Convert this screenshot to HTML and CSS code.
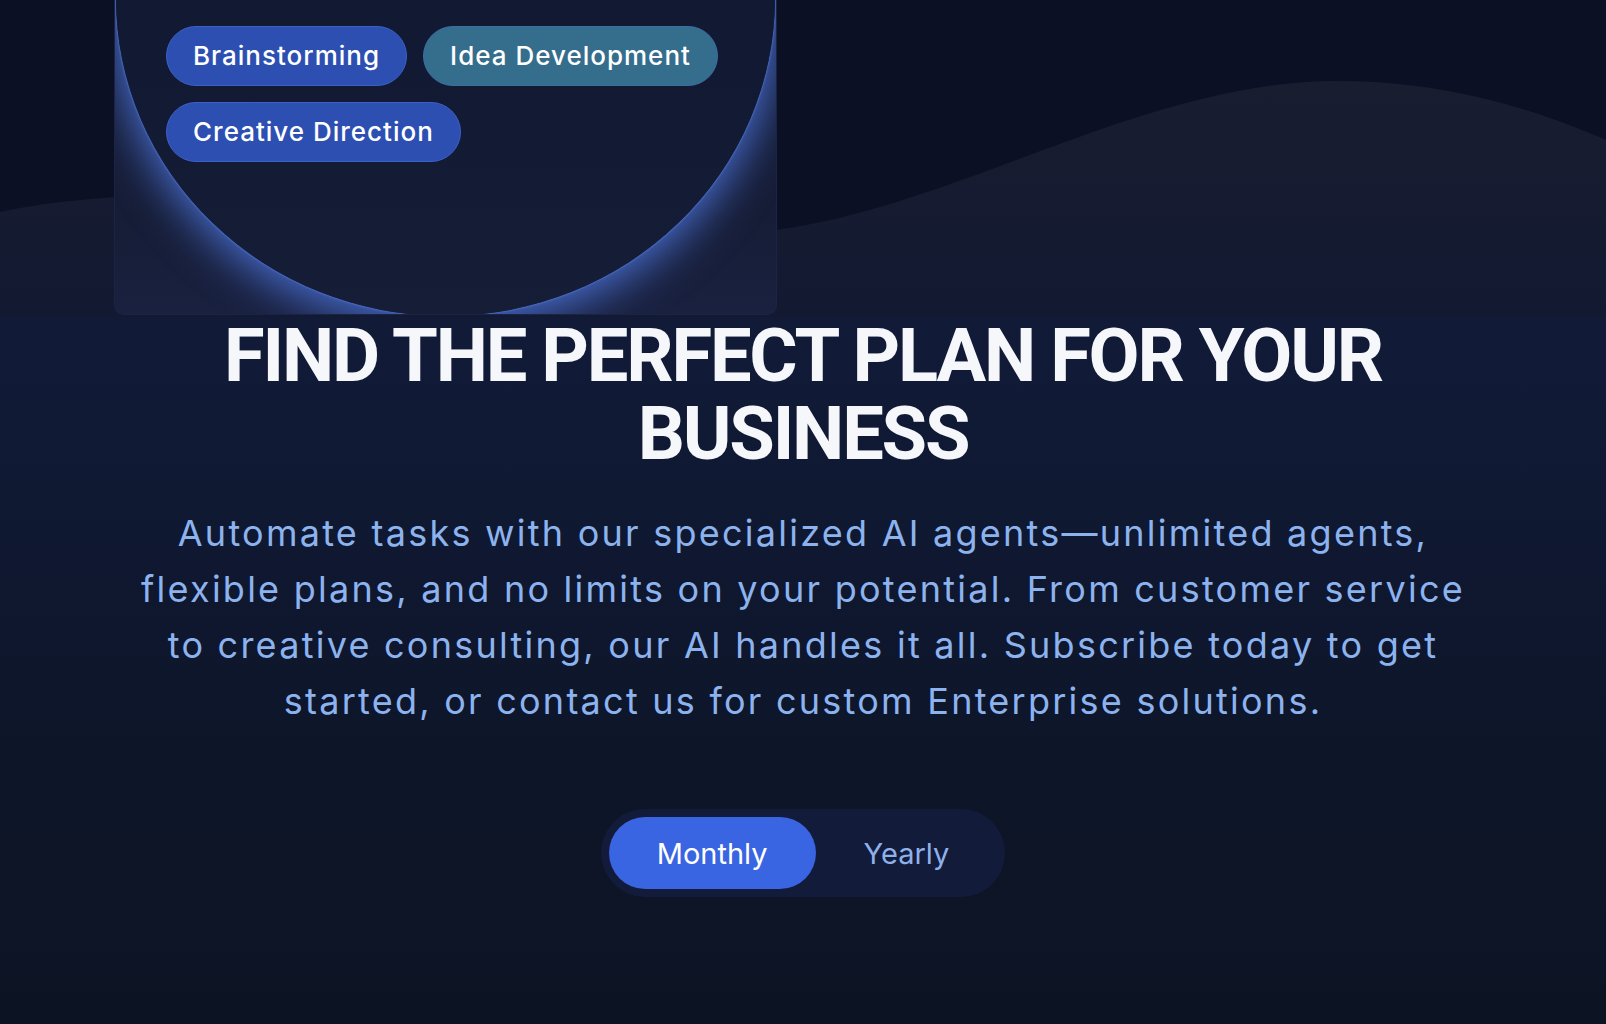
FILE: index.html
```html
<!DOCTYPE html>
<html lang="en">
<head>
<meta charset="utf-8">
<title>Pricing</title>
<link rel="stylesheet" href="styles.css">
</head>
<body>
  <section class="showcase">
    <svg class="wave" viewBox="0 0 1606 317" preserveAspectRatio="none" aria-hidden="true">
      <defs>
        <linearGradient id="waveFill" x1="0" y1="0" x2="0" y2="1">
          <stop offset="0" stop-color="#181d30"/>
          <stop offset="1" stop-color="#131931"/>
        </linearGradient>
      </defs>
      <path d="M0,212 C250,160 550,250 776,230 C960,205 1140,84 1331,81 C1450,80 1540,112 1606,140 L1606,317 L0,317 Z" fill="url(#waveFill)"/>
    </svg>
    <div class="card">
      <div class="arc"></div>
      <div class="tags">
        <span class="tag">Brainstorming</span>
        <span class="tag tag-teal">Idea Development</span>
        <span class="tag">Creative Direction</span>
      </div>
    </div>
  </section>

  <section class="pricing">
    <h1 class="pricing-title">FIND THE PERFECT PLAN FOR YOUR<br>BUSINESS</h1>
    <p class="pricing-lead">Automate tasks with our specialized AI agents—unlimited agents,<br>flexible plans, and no limits on your potential. From customer service<br>to creative consulting, our AI handles it all. Subscribe today to get<br>started, or contact us for custom Enterprise solutions.</p>
    <div class="billing-toggle">
      <button class="toggle-btn is-active" type="button">Monthly</button>
      <button class="toggle-btn" type="button">Yearly</button>
    </div>
  </section>
</body>
</html>
```

FILE: styles.css
```css
* { box-sizing: border-box; }

html, body {
  margin: 0;
  padding: 0;
}

body {
  background: #0c1424;
  font-family: "Inter", "Liberation Sans", sans-serif;
  overflow: hidden;
}

/* ---------- top showcase ---------- */
.showcase {
  position: relative;
  height: 317px;
  background: #0b1024;
  padding-left: 114px;
  overflow: hidden;
}

.wave {
  position: absolute;
  inset: 0;
  width: 100%;
  height: 100%;
  display: block;
}

.card {
  position: relative;
  width: 663px;
  height: 315px;
  background: linear-gradient(180deg, #151c35 0%, #161d36 70%, #1a2140 100%);
  border: 1px solid #1b2444;
  border-top: none;
  border-radius: 0 0 10px 10px;
  overflow: hidden;
}

.arc {
  position: absolute;
  left: 1px;
  right: 1px;
  top: -320px;
  height: 636px;
  border-radius: 50%;
  background: linear-gradient(180deg, #121a33 0%, #121a33 60%, #161e37 100%);
  box-shadow:
    0 0 2px 1px rgba(85, 125, 225, 0.6),
    0 6px 44px 4px rgba(78, 118, 222, 0.92);
}

.tags {
  position: relative;
  display: flex;
  flex-wrap: wrap;
  gap: 16px;
  padding: 26px 0 0 51px;
  max-width: 620px;
}

.tag {
  display: inline-block;
  height: 60px;
  line-height: 58px;
  padding: 0 26px;
  border-radius: 30px;
  background: #2d4fb1;
  border: 1px solid #3b60c9;
  color: #ffffff;
  font-size: 26px;
  font-weight: 500;
  letter-spacing: 1px;
  white-space: nowrap;
}

.tag-teal {
  background: #356d8c;
  border-color: #3d6ca6;
}

/* ---------- pricing ---------- */
.pricing {
  height: 707px;
  background: linear-gradient(180deg, #111b38 0%, #0f1830 35%, #0d1528 65%, #0c1424 100%);
  text-align: center;
  padding-top: 1px;
}

.pricing-title {
  margin: -1px auto 0;
  font-family: "Roboto", "Liberation Sans", sans-serif;
  font-weight: 700;
  font-size: 74px;
  line-height: 78px;
  letter-spacing: -2.2px;
  color: #f6f7fb;
}

.pricing-lead {
  margin: 32px auto 0;
  font-size: 36px;
  line-height: 56px;
  letter-spacing: 2.25px;
  color: #8db3ef;
  font-weight: 400;
}

.billing-toggle {
  display: inline-flex;
  margin-top: 80px;
  padding: 8px;
  border-radius: 45px;
  background: #131b3a;
}

.toggle-btn {
  height: 72px;
  padding: 0 48px;
  border: none;
  border-radius: 36px;
  background: transparent;
  color: #8fb1ea;
  font-family: "Inter", "Liberation Sans", sans-serif;
  font-size: 29px;
  font-weight: 400;
  cursor: pointer;
}

.toggle-btn.is-active {
  background: #3964e2;
  color: #ffffff;
}
```
